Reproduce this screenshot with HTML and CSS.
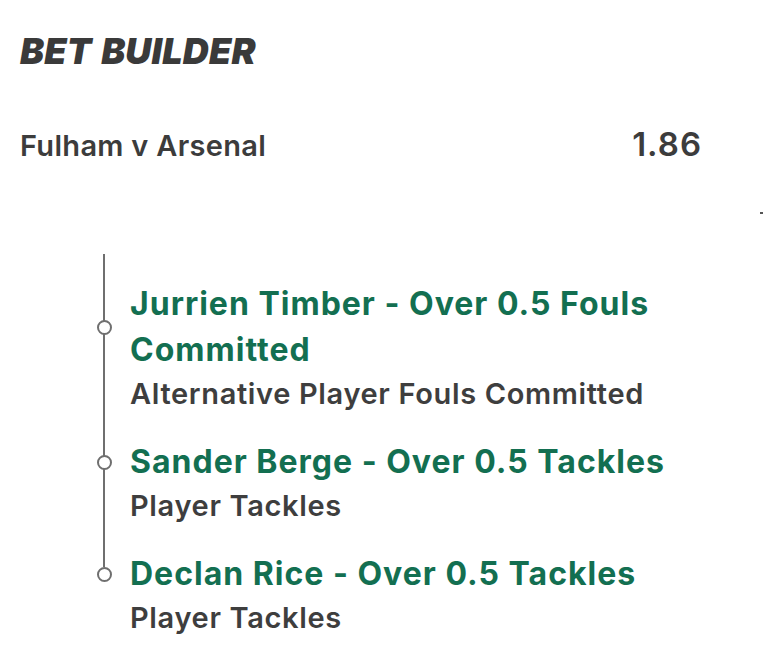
FILE: index.html
```html
<!DOCTYPE html>
<html lang="en">
<head>
<meta charset="utf-8">
<title>Bet Builder</title>
<link rel="stylesheet" href="styles.css">
</head>
<body>
<main class="slip">
  <h1 class="title">BET BUILDER</h1>
  <div class="match">
    <span class="match-name">Fulham v Arsenal</span>
    <span class="odds">1.86</span>
  </div>
  <div class="mark-row"><span class="mark"></span></div>
  <ol class="legs">
    <li class="leg">
      <span class="node"></span>
      <span class="leg-title">Jurrien Timber - Over 0.5 Fouls Committed</span>
      <span class="leg-market">Alternative Player Fouls Committed</span>
    </li>
    <li class="leg">
      <span class="node"></span>
      <span class="leg-title">Sander Berge - Over 0.5 Tackles</span>
      <span class="leg-market">Player Tackles</span>
    </li>
    <li class="leg">
      <span class="node"></span>
      <span class="leg-title">Declan Rice - Over 0.5 Tackles</span>
      <span class="leg-market">Player Tackles</span>
    </li>
  </ol>
</main>
</body>
</html>
```

FILE: styles.css
```css
* { box-sizing: border-box; }
html, body { margin: 0; padding: 0; background: #ffffff; }
body {
  font-family: "Inter", "Roboto", sans-serif;
  color: #3c3c3c;
  width: 763px;
  height: 664px;
  overflow: hidden;
}
.slip { padding: 0 0 0 20px; }
.title {
  margin: 0;
  padding-top: 31px;
  font-family: "Inter", "Open Sans", sans-serif;
  font-weight: 900;
  font-style: italic;
  font-size: 36px;
  line-height: 40px;
  letter-spacing: 0.2px;
  word-spacing: 2px;
  color: #3a3a3a;
}
.match {
  display: flex;
  justify-content: space-between;
  align-items: baseline;
  width: 682px;
  margin-top: 53px;
}
.match-name {
  font-size: 29px;
  font-weight: 600;
  letter-spacing: 0.3px;
  color: #3c3c3c;
}
.odds {
  font-size: 33px;
  font-weight: 600;
  letter-spacing: 1px;
  color: #3c3c3c;
}
.mark-row {
  display: flex;
  justify-content: flex-end;
  margin-top: 48px;
}
.mark { width: 3px; height: 2px; background: #555; }
.legs {
  list-style: none;
  margin: 29px 0 0 77px;
  padding: 38px 0 0 0;
  position: relative;
  display: flex;
  flex-direction: column;
  gap: 24px;
}
.legs::before {
  content: "";
  position: absolute;
  left: 6px;
  top: 11px;
  bottom: 72px;
  width: 2px;
  background: #6f6f6f;
}
.leg {
  display: grid;
  grid-template-columns: 15px 1fr;
  column-gap: 18px;
  position: relative;
}
.node {
  grid-column: 1;
  grid-row: 1;
  align-self: center;
  width: 15px;
  height: 15px;
  border: 2px solid #6f6f6f;
  border-radius: 50%;
  background: #ffffff;
  position: relative;
  z-index: 1;
}
.leg-title {
  grid-column: 2;
  grid-row: 1;
  font-size: 32px;
  line-height: 46px;
  font-weight: 700;
  letter-spacing: 1px;
  color: #136f51;
  max-width: 580px;
}
.leg-market {
  grid-column: 2;
  grid-row: 2;
  font-size: 29px;
  line-height: 42px;
  font-weight: 600;
  letter-spacing: 0.65px;
  color: #3e3e3e;
}
```
